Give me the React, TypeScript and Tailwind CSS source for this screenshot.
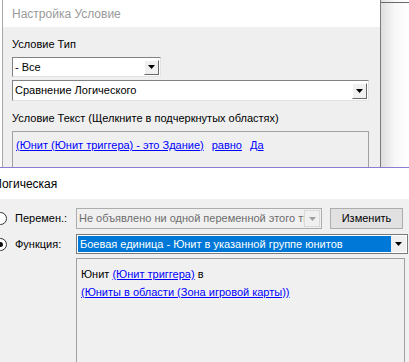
import React from "react";

const font = { fontFamily: '"Liberation Sans", Arial, sans-serif' };

function Arrow({ color = "#000" }: { color?: string }) {
  return (
    <svg width="7" height="4" viewBox="0 0 7 4">
      <path d="M0 0 H7 L3.5 4 Z" fill={color} />
    </svg>
  );
}

function Link({ children }: { children: React.ReactNode }) {
  return <span className="text-[#0000ff] underline underline-offset-[1px]">{children}</span>;
}

export default function App() {
  return (
    <div className="relative w-[409px] h-[362px] overflow-hidden bg-white text-[11px] text-black" style={font}>
      {/* far background window edge */}
      <div className="absolute left-[380px] top-0 w-[29px] h-[167px] bg-gradient-to-r from-[#dcdcdc] via-[#f7f7f7] to-white">
        <div className="mt-[2px] h-[1px] bg-[#6a6a6a]" />
      </div>

      {/* Back window: Настройка Условие */}
      <div className="absolute left-[2px] top-0 w-[379px] h-[167px] flex flex-col border-l border-[#a8a8a8] border-r border-r-[#7c7c7c]">
        <div className="h-[27px] bg-white flex items-center pl-[9px] text-[12px] text-[#999999]">
          Настройка Условие
        </div>
        <div className="flex-1 bg-[#efefef] pl-[9px] pr-[11px] flex flex-col">
          <div className="mt-[10px] h-[14px] leading-[14px]">Условие Тип</div>
          <div className="mt-[6px] w-[149px] h-[20px] bg-white border border-t-[#828282] border-l-[#828282] border-r-[#e3e3e3] border-b-[#e3e3e3] flex items-center">
            <div className="flex-1 pl-[2px]">- Все</div>
            <div className="w-[15px] h-[15px] mr-[1px] bg-[#f0f0f0] border border-t-white border-l-white border-r-[#696969] border-b-[#696969] flex items-center justify-center">
              <Arrow />
            </div>
          </div>
          <div className="mt-[3px] w-full h-[21px] bg-white border border-t-[#828282] border-l-[#828282] border-r-[#e3e3e3] border-b-[#e3e3e3] flex items-center">
            <div className="flex-1 pl-[2px]">Сравнение Логического</div>
            <div className="w-[15px] h-[16px] mr-[1px] bg-[#f0f0f0] border border-t-white border-l-white border-r-[#696969] border-b-[#696969] flex items-center justify-center">
              <Arrow />
            </div>
          </div>
          <div className="mt-[10px] h-[14px] leading-[14px]">Условие Текст (Щелкните в подчеркнутых областях)</div>
          <div className="mt-[6px] flex-1 border border-[#a0a0a0] border-b-0 pl-[3px] pt-[5px]">
            <div className="flex gap-[8px]">
              <Link>(Юнит (Юнит триггера) - это Здание)</Link>
              <Link>равно</Link>
              <Link>Да</Link>
            </div>
          </div>
        </div>
      </div>

      {/* Front window: Логическая */}
      <div className="absolute left-[-12px] top-[167px] w-[421px] h-[195px] flex flex-col border-t border-[#8a7cd6]">
        <div className="h-[31px] bg-white flex items-center pl-[6px] text-[12px]">Логическая</div>
        <div className="flex-1 bg-[#f0f0f0] pl-[6px] flex flex-col">
          <div className="mt-[9px] flex items-center h-[21px]">
            <div className="w-[13px] h-[13px] rounded-full border border-[#333] bg-white" />
            <div className="ml-[8px] w-[61px] text-[#000]">Перемен.:</div>
            <div className="w-[246px] h-[21px] bg-[#f0f0f0] border border-[#adadad] flex items-center">
              <div className="flex-1 pl-[2px] text-[#6d6d6d] whitespace-nowrap overflow-hidden">Не объявлено ни одной переменной этого ти</div>
              <div className="w-[16px] h-[17px] mr-[1px] bg-[#f0f0f0] border border-[#dadada] flex items-center justify-center">
                <Arrow color="#a0a0a0" />
              </div>
            </div>
            <div className="ml-[8px] w-[73px] h-[21px] bg-[#e1e1e1] border border-[#adadad] flex items-center justify-center">
              Изменить
            </div>
          </div>
          <div className="mt-[5px] flex items-center h-[20px]">
            <div className="w-[13px] h-[13px] rounded-full border border-[#333] bg-white flex items-center justify-center">
              <div className="w-[5px] h-[5px] rounded-full bg-[#111]" />
            </div>
            <div className="ml-[8px] w-[61px]">Функция:</div>
            <div className="w-[332px] h-[20px] bg-white border border-[#7a7a7a] flex items-center p-[1px]">
              <div className="flex-1 h-full bg-[#0078d7] text-white pl-[2px] flex items-center">
                Боевая единица - Юнит в указанной группе юнитов
              </div>
              <div className="w-[15px] h-full bg-[#f0f0f0] flex items-center justify-center">
                <Arrow />
              </div>
            </div>
          </div>
          <div className="ml-[82px] mt-[4px] w-[329px] flex-1 border border-[#a0a0a0] border-b-0 pl-[4px] pt-[6px] leading-[18px]">
            <div>
              Юнит <Link>(Юнит триггера)</Link> в
            </div>
            <div>
              <Link>(Юниты в области (Зона игровой карты))</Link>
            </div>
          </div>
        </div>
      </div>
    </div>
  );
}
